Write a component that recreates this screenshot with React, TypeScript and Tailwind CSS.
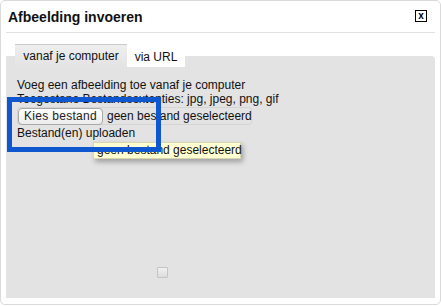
import React from "react";

const font = { fontFamily: '"Liberation Sans", Arial, Helvetica, sans-serif' };

export default function App() {
  return (
    <div className="w-[441px] h-[306px] bg-white overflow-hidden" style={font}>
      <div className="relative h-[305px] border border-[#dadada] rounded-[5px] bg-white flex flex-col">
        {/* header */}
        <div className="flex items-center justify-between h-[32px] mx-[5px] border-b border-[#e2e2e2] pl-[2px] pr-[8px]">
          <h2 className="text-[14px] font-bold text-[#111] pt-[1px]">Afbeelding invoeren</h2>
          <button className="w-[12px] h-[12px] border border-black bg-white flex items-center justify-center text-[10px] leading-none font-bold text-black mt-[-1px]">
            x
          </button>
        </div>

        {/* tabs */}
        <div className="relative z-10 flex items-start mt-[11px] ml-[14px] h-[23px]">
          <div className="h-[23px] w-[112px] border-t border-[#c9c9c9] bg-gradient-to-b from-[#eeeeee] to-[#e3e3e3] text-[12px] text-[#111] flex items-center justify-center whitespace-nowrap">
            vanaf je computer
          </div>
          <div className="mt-[2px] h-[21px] w-[58px] bg-white text-[12px] text-[#111] flex items-center justify-center whitespace-nowrap">
            via URL
          </div>
        </div>

        {/* panel */}
        <div className="mx-[5px] -mt-[11px] h-[242px] bg-[#e3e3e3] rounded-tr-[4px] flex flex-col pl-[11px] pt-[22px] text-[12px] leading-[14px] text-[#111] whitespace-nowrap">
          <p>Voeg een afbeelding toe vanaf je computer</p>
          <p>Toegestane Bestandsextenties: jpg, jpeg, png, gif</p>
          <div className="mt-[1px] flex items-center w-[235px] h-[18px] border border-[#d4d4d4] rounded-[3px]">
            <span className="shrink-0 h-[17px] w-[85px] flex items-center justify-center rounded-[4px] border border-[#a9a9a9] bg-gradient-to-b from-white to-[#ececec] text-[12px] text-[#222] tracking-[0.3px]">
              Kies bestand
            </span>
            <span className="ml-[4px]">geen bestand geselecteerd</span>
          </div>
          <p className="mt-[1px]">Bestand(en) uploaden</p>
          <div className="mt-auto mb-[20px] ml-[140px] w-[11px] h-[11px] border border-[#c4c4c4] rounded-[1px] bg-gradient-to-b from-[#f2f2f2] to-[#dcdcdc]" />
        </div>

        {/* tooltip */}
        <div className="absolute left-[92px] top-[141px] w-[148px] h-[17px] bg-[#ffffd2] border border-[#d8d8b0] shadow-[2px_3px_5px_rgba(0,0,0,0.3)] text-[12px] leading-[15px] pl-[3px] text-[#111] whitespace-nowrap z-20">
          geen bestand geselecteerd
        </div>

        {/* highlight */}
        <div className="absolute left-[6px] top-[96px] w-[154px] h-[55px] border-[5px] border-[#0f57cf] z-30" />
      </div>
    </div>
  );
}
